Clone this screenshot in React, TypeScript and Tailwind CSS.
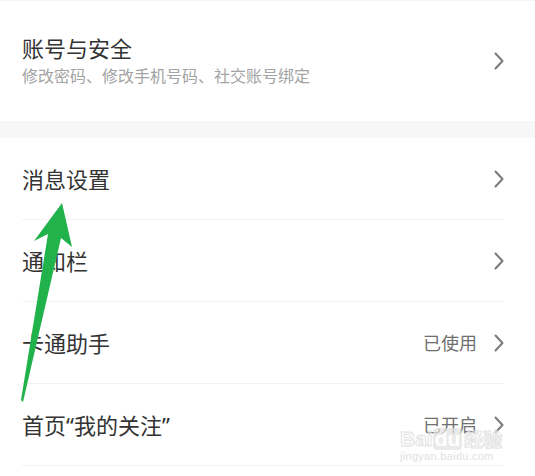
const rows = [
  { title: '消息设置', value: '' },
  { title: '通知栏', value: '' },
  { title: '卡通助手', value: '已使用' },
  { title: 'quote', value: '已开启' },
]

function Chevron() {
  return (
    <svg width="10" height="18" viewBox="0 0 10 18" className="shrink-0">
      <path d="M1.5 1.5 L8.5 9 L1.5 16.5" fill="none" stroke="#7a7a7a" strokeWidth="2" strokeLinecap="round" strokeLinejoin="round" />
    </svg>
  )
}

function Title({ t }: { t: string }) {
  if (t !== 'quote') return <>{t}</>
  return (
    <>
      首页<span className="font-['Noto_Sans',sans-serif]">“</span>我的关注<span className="font-['Noto_Sans',sans-serif]">”</span>
    </>
  )
}

export default function App() {
  return (
    <div className="relative w-[535px] h-[476px] overflow-hidden bg-white font-['Noto_Sans_CJK_SC','Noto_Sans',sans-serif]">
      <div className="h-px bg-[#f4f4f4]" />
      {/* 账号与安全 */}
      <div className="flex items-center h-[120px] pl-[22px] pr-[31px]">
        <div className="flex-1 -mt-[3px]">
          <p className="text-[22px] leading-[28px] text-[#333]">账号与安全</p>
          <p className="text-[16px] leading-[22px] text-[#a3a3a3] mt-[3px]">修改密码、修改手机号码、社交账号绑定</p>
        </div>
        <Chevron />
      </div>

      <div className="h-[17px] bg-[#f7f7f7]" />

      <div className="pl-[22px] pr-[31px]">
        {rows.map((r) => (
          <div key={r.title} className="flex items-center h-[82px] border-b border-[#f2f2f2]">
            <span className="flex-1 text-[22px] text-[#333]"><Title t={r.title} /></span>
            {r.value && <span className="text-[18px] text-[#6f6f6f] mr-[17px]">{r.value}</span>}
            <Chevron />
          </div>
        ))}
      </div>

      {/* baidu watermark */}
      <div className="absolute left-[400px] top-[428px] flex flex-col items-start opacity-70 pointer-events-none">
        <span className="flex items-center text-[21px] leading-[22px] font-bold font-['Liberation_Sans',sans-serif] text-white [-webkit-text-stroke:1px_#d6d6d6]">
          Bai<span className="px-[2px] rounded-[4px] bg-[#e2e2e2] [-webkit-text-stroke:0px]">du</span>
          <span className="font-['Noto_Sans_CJK_SC',sans-serif] ml-[2px] text-[19px]">经验</span>
        </span>
        <span className="text-[11px] leading-[13px] tracking-[0.3px] font-['Liberation_Sans',sans-serif] text-[#d4d4d4]">jingyan.baidu.com</span>
      </div>

      {/* annotation arrow */}
      <svg className="absolute left-0 top-0 pointer-events-none" width="535" height="476">
        <polygon points="62,203 72,247 61,238 23,402 21,400 48,234 34,241" fill="#21b24b" />
      </svg>
    </div>
  )
}
